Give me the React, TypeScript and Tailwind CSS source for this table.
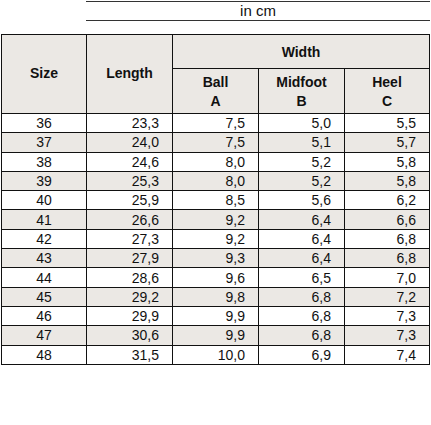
const rows: [string, string, string, string, string][] = [
  ["36", "23,3", "7,5", "5,0", "5,5"],
  ["37", "24,0", "7,5", "5,1", "5,7"],
  ["38", "24,6", "8,0", "5,2", "5,8"],
  ["39", "25,3", "8,0", "5,2", "5,8"],
  ["40", "25,9", "8,5", "5,6", "6,2"],
  ["41", "26,6", "9,2", "6,4", "6,6"],
  ["42", "27,3", "9,2", "6,4", "6,8"],
  ["43", "27,9", "9,3", "6,4", "6,8"],
  ["44", "28,6", "9,6", "6,5", "7,0"],
  ["45", "29,2", "9,8", "6,8", "7,2"],
  ["46", "29,9", "9,9", "6,8", "7,3"],
  ["47", "30,6", "9,9", "6,8", "7,3"],
  ["48", "31,5", "10,0", "6,9", "7,4"],
];

export default function App() {
  return (
    <div
      className="h-[425px] w-[431px] bg-white text-[#111]"
      style={{ fontFamily: '"Liberation Sans", Arial, sans-serif' }}
    >
      <div className="ml-[86px] mr-[1px] mt-[1px] flex h-[20px] items-center justify-center border-y border-[#333] text-[15px]">
        in cm
      </div>
      <table className="ml-[1px] mt-[13px] w-[428px] table-fixed border-collapse border border-[#111] text-[14px]">
        <colgroup>
          <col className="w-[85px]" />
          <col className="w-[86px]" />
          <col className="w-[86px]" />
          <col className="w-[86px]" />
          <col className="w-[85px]" />
        </colgroup>
        <thead className="bg-[#ebe8e4] font-bold">
          <tr className="h-[34px]">
            <th rowSpan={2} className="border border-[#111] pb-[1px] align-middle">
              Size
            </th>
            <th rowSpan={2} className="border border-[#111] pb-[1px] align-middle">
              Length
            </th>
            <th colSpan={3} className="border border-[#111] pt-[1px]">
              Width
            </th>
          </tr>
          <tr className="h-[45px]">
            {[
              ["Ball", "A"],
              ["Midfoot", "B"],
              ["Heel", "C"],
            ].map(([a, b]) => (
              <th key={a} className="border border-[#111] pt-[1px] leading-[19px]">
                {a}
                <br />
                {b}
              </th>
            ))}
          </tr>
        </thead>
        <tbody className="text-[14px]">
          {rows.map((r, i) => (
            <tr key={r[0]} className={i % 2 === 1 ? "h-[19.3px] bg-[#ebe8e4]" : "h-[19.3px] bg-white"}>
              <td className="border border-[#111] py-0 text-center leading-[18px]">{r[0]}</td>
              {r.slice(1).map((v, j) => (
                <td key={j} className="border border-[#111] py-0 pr-[13px] text-right leading-[18px]">
                  {v}
                </td>
              ))}
            </tr>
          ))}
        </tbody>
      </table>
    </div>
  );
}
